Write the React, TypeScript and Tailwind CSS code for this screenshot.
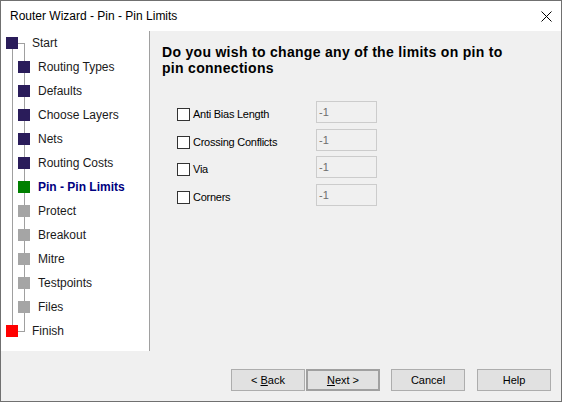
import React from 'react';

const SANS = { fontFamily: '"Liberation Sans", Arial, sans-serif' };

type Step = { label: string; state: 'done' | 'current' | 'todo' | 'end'; root?: boolean };

const steps: Step[] = [
  { label: 'Start', state: 'done', root: true },
  { label: 'Routing Types', state: 'done' },
  { label: 'Defaults', state: 'done' },
  { label: 'Choose Layers', state: 'done' },
  { label: 'Nets', state: 'done' },
  { label: 'Routing Costs', state: 'done' },
  { label: 'Pin - Pin Limits', state: 'current' },
  { label: 'Protect', state: 'todo' },
  { label: 'Breakout', state: 'todo' },
  { label: 'Mitre', state: 'todo' },
  { label: 'Testpoints', state: 'todo' },
  { label: 'Files', state: 'todo' },
  { label: 'Finish', state: 'end', root: true },
];

const squareColor: Record<Step['state'], string> = {
  done: 'bg-[#2a1c5a]',
  current: 'bg-[#008000]',
  todo: 'bg-[#a5a5a5]',
  end: 'bg-[#ff0000]',
};

const limits = [
  { label: 'Anti Bias Length', mt: '' },
  { label: 'Crossing Conflicts', mt: 'mt-[6px]' },
  { label: 'Via', mt: 'mt-[5px]' },
  { label: 'Corners', mt: 'mt-[6px]' },
];

function StepTree() {
  return (
    <div className="relative w-[148px] h-full bg-white">
      {/* connector lines */}
      <svg className="absolute left-0 top-0" width="148" height="320">
        <g stroke="#a0a0a0" strokeWidth="1" shapeRendering="crispEdges">
          <line x1="11.5" y1="18" x2="11.5" y2="294" />
          <line x1="23.5" y1="12" x2="23.5" y2="300" />
          <line x1="17" y1="12.5" x2="24" y2="12.5" />
          <line x1="17" y1="300.5" x2="24" y2="300.5" />
        </g>
      </svg>
      <div className="relative flex flex-col">
        {steps.map((s) => (
          <div
            key={s.label}
            className={`flex items-center h-6 text-[12px] ${s.root ? 'pl-[5px]' : 'pl-[17px]'}`}
          >
            <span className={`w-3 h-3 shrink-0 ${squareColor[s.state]}`} />
            <span
              className={`${s.root ? 'ml-[14px]' : 'ml-[8px]'} ${
                s.state === 'current' ? 'font-bold text-[#000080]' : 'text-[#1a1a1a]'
              }`}
            >
              {s.label}
            </span>
          </div>
        ))}
      </div>
    </div>
  );
}

function Button({ children, primary }: { children: React.ReactNode; primary?: boolean }) {
  return (
    <button
      className={`w-[74px] h-[22px] bg-[#e1e1e1] text-[11px] text-black flex items-center justify-center ${
        primary ? 'border-2 border-[#a0a0a0]' : 'border border-[#adadad]'
      }`}
    >
      {children}
    </button>
  );
}

export default function App() {
  return (
    <div className="w-[562px] h-[402px] border border-[#707070] bg-[#f0f0f0] flex flex-col" style={SANS}>
      {/* title bar */}
      <div className="h-[30px] bg-white flex items-center justify-between pl-[9px] pr-[9px]">
        <span className="text-[12px] text-black">Router Wizard - Pin - Pin Limits</span>
        <svg width="11" height="11" viewBox="0 0 11 11" className="mr-[0px]">
          <path d="M0.5 0.5 L10.5 10.5 M10.5 0.5 L0.5 10.5" stroke="#000" strokeWidth="1" />
        </svg>
      </div>

      <div className="h-[320px] flex">
        <StepTree />
        <div className="w-px bg-[#a0a0a0]" />
        <div className="flex-1 pl-[12px] pt-[13px]">
          <h1 className="w-[350px] text-[14px] leading-[16px] font-bold tracking-[0.3px] text-black">
            Do you wish to change any of the limits on pin to pin connections
          </h1>
          <div className="mt-[25px] pl-[15px] flex flex-col">
            {limits.map((l) => (
              <div key={l.label} className={`flex h-[22px] ${l.mt}`}>
                <label className="w-[139px] flex items-start pt-[7px]">
                  <span className="w-[13px] h-[13px] border border-[#333333] bg-white shrink-0" />
                  <span className="ml-[3px] text-[11px] leading-[13px] tracking-[-0.25px] text-black">
                    {l.label}
                  </span>
                </label>
                <div className="w-[61px] h-[22px] border border-[#cccccc] bg-[#f0f0f0] pl-[2px] pt-[3px] text-[11px] leading-[14px] text-[#6d6d6d]">
                  -1
                </div>
              </div>
            ))}
          </div>
        </div>
      </div>

      {/* footer buttons */}
      <div className="h-[50px] pt-[18px] pr-[10px] flex justify-end items-start">
        <Button>
          &lt; <span className="underline ml-[3px]">B</span>ack
        </Button>
        <div className="ml-[1px]">
          <Button primary>
            <span className="underline">N</span>ext &gt;
          </Button>
        </div>
        <div className="ml-[11px]">
          <Button>Cancel</Button>
        </div>
        <div className="ml-[12px]">
          <Button>Help</Button>
        </div>
      </div>
    </div>
  );
}
